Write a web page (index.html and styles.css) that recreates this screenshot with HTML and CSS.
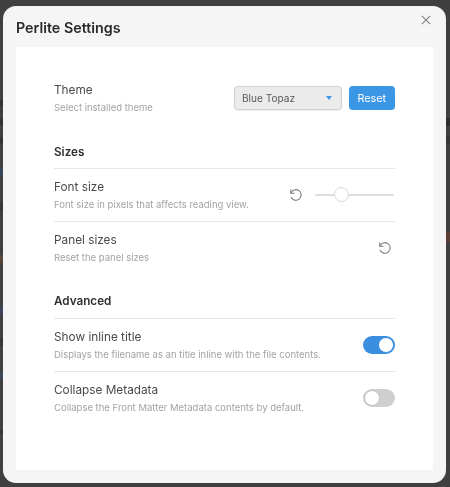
FILE: index.html
```html
<!DOCTYPE html>
<html lang="en">
<head>
<meta charset="utf-8">
<title>Perlite Settings</title>
<link rel="stylesheet" href="styles.css">
</head>
<body>
<div class="modal">
  <button class="close" aria-label="Close">
    <svg width="10" height="10" viewBox="0 0 10 10"><path d="M.8.8l8.4 8.4M9.2.8L.8 9.2"/></svg>
  </button>
  <h1 class="modal-title">Perlite Settings</h1>
  <div class="content">
    <div class="item first">
      <div class="info"><div class="name">Theme</div><div class="desc">Select installed theme</div></div>
      <div class="control">
        <div class="select"><span>Blue Topaz</span><i class="caret"></i></div>
        <button class="btn">Reset</button>
      </div>
    </div>
    <h2 class="heading">Sizes</h2>
    <div class="item">
      <div class="info"><div class="name">Font size</div><div class="desc">Font size in pixels that affects reading view.</div></div>
      <div class="control">
        <svg class="undo" width="14" height="14" viewBox="0 0 14 14"><path d="M1.8 1.6v3.7h3.7"/><path d="M1.9 5.2A5.3 5.3 0 1 1 2 9"/></svg>
        <div class="slider"><i class="thumb"></i></div>
      </div>
    </div>
    <div class="item">
      <div class="info"><div class="name">Panel sizes</div><div class="desc">Reset the panel sizes</div></div>
      <div class="control">
        <svg class="undo solo" width="14" height="14" viewBox="0 0 14 14"><path d="M1.8 1.6v3.7h3.7"/><path d="M1.9 5.2A5.3 5.3 0 1 1 2 9"/></svg>
      </div>
    </div>
    <h2 class="heading adv">Advanced</h2>
    <div class="item">
      <div class="info"><div class="name">Show inline title</div><div class="desc">Displays the filename as an title inline with the file contents.</div></div>
      <div class="control"><div class="toggle on"><i></i></div></div>
    </div>
    <div class="item">
      <div class="info"><div class="name">Collapse Metadata</div><div class="desc">Collapse the Front Matter Metadata contents by default.</div></div>
      <div class="control"><div class="toggle"><i></i></div></div>
    </div>
  </div>
</div>
</body>
</html>
```
FILE: styles.css
```css
* { box-sizing: border-box; }
html, body { margin: 0; height: 100%; }
body {
  position: relative;
  width: 450px;
  height: 487px;
  overflow: hidden;
  background: #404040;
  padding: 6px 4px 4px 3px;
  font-family: Inter, "Liberation Sans", sans-serif;
}
/* Faint traces of the dimmed page behind the dialog */
body::before,
body::after {
  content: "";
  position: absolute;
  top: 0;
  bottom: 0;
  width: 4px;
  filter: blur(.6px);
}
body::before {
  left: 0;
  background: linear-gradient(to bottom,
    transparent 100px, #333 100px, #333 106px, transparent 106px,
    transparent 119px, #333 119px, #333 125px, transparent 125px,
    transparent 138px, #333 138px, #333 144px, transparent 144px,
    transparent 169px, #36465c 169px, #36465c 177px, transparent 177px,
    transparent 203px, #363636 203px, #363636 211px, transparent 211px,
    transparent 255px, #5a4634 255px, #5a4634 263px, transparent 263px,
    transparent 306px, #3c4656 306px, #3c4656 314px, transparent 314px,
    transparent 338px, #363636 338px, #363636 346px, transparent 346px,
    transparent 371px, #3c4656 371px, #3c4656 379px, transparent 379px,
    transparent 430px, #363636 430px, #363636 434px, transparent 434px);
}
body::after {
  right: 0;
  background: linear-gradient(to bottom,
    transparent 118px, #2e2e2e 118px, #2e2e2e 126px, transparent 126px,
    transparent 136px, #363636 136px, #363636 144px, transparent 144px,
    transparent 232px, #5c4038 232px, #5c4038 242px, transparent 242px);
}
.modal {
  position: relative;
  z-index: 1;
  height: 477px;
  background: #f5f5f5;
  border-radius: 13px;
  padding: 12px 13px 13px;
  display: flex;
  flex-direction: column;
  filter: blur(.4px);
}
.close {
  position: absolute;
  top: 9px;
  right: 15px;
  width: 10px;
  height: 10px;
  padding: 0;
  border: 0;
  background: none;
  display: flex;
}
.close path { stroke: #808080; stroke-width: 1.1; fill: none; }
.modal-title {
  margin: 0 0 10px;
  font-size: 14.3px;
  line-height: 19px;
  font-weight: 600;
  color: #2a2a2a;
}
.content {
  flex: 1;
  background: #fff;
  padding: 25px 38px 0;
}
.item {
  display: flex;
  align-items: center;
  justify-content: space-between;
  height: 53px;
  border-top: 1px solid #e6e6e6;
}
.item.first { border-top: 0; height: 52px; }
.name { font-size: 11.8px; line-height: 16px; color: #4a4a4a; }
.desc { font-size: 9.5px; line-height: 13px; color: #a3a3a3; margin-top: 3px; }
.control { display: flex; align-items: center; }
.select {
  width: 108px;
  height: 24px;
  border: 1px solid #d2d2d2;
  border-radius: 4px;
  background: #ebebeb;
  box-shadow: 0 1px 1px rgba(0,0,0,.08);
  padding: 0 9px 0 7px;
  display: flex;
  align-items: center;
  justify-content: space-between;
  font-size: 10.1px;
  color: #5a5a5a;
}
.caret {
  width: 0;
  height: 0;
  border-left: 3px solid transparent;
  border-right: 3px solid transparent;
  border-top: 4px solid #3f97e6;
}
.btn {
  margin-left: 6.5px;
  width: 46.5px;
  height: 24px;
  border: 0;
  border-radius: 4px;
  background: #3b96e6;
  color: #fff;
  font: 400 10.8px Inter, "Liberation Sans", sans-serif;
  padding: 0;
}
.heading {
  margin: 0;
  height: 44px;
  padding-top: 20px;
  font-size: 11.7px;
  line-height: 16px;
  font-weight: 600;
  color: #2f2f2f;
}
.heading.adv { padding-top: 19px; }
.undo { margin-right: 12px; }
.undo path { stroke: #7d7d7d; stroke-width: 1.1; fill: none; }
.undo.solo { margin-right: 3px; }
.slider {
  position: relative;
  margin-right: 1px;
  width: 79px;
  height: 2px;
  background: #dcdcdc;
  border-radius: 1px;
}
.thumb {
  position: absolute;
  left: 19px;
  top: -7px;
  width: 15px;
  height: 15px;
  border-radius: 50%;
  background: #fff;
  border: 1.5px solid #d8d8d8;
}
.toggle {
  position: relative;
  width: 32px;
  height: 18px;
  border-radius: 9px;
  background: #cfcfcf;
}
.toggle i {
  position: absolute;
  top: 1px;
  left: 1px;
  width: 16px;
  height: 16px;
  border-radius: 50%;
  background: #fff;
  border: 1px solid #c2c2c2;
}
.toggle.on { background: #3b8fe0; }
.toggle.on i { left: 15px; border-color: #3b8fe0; }
```
